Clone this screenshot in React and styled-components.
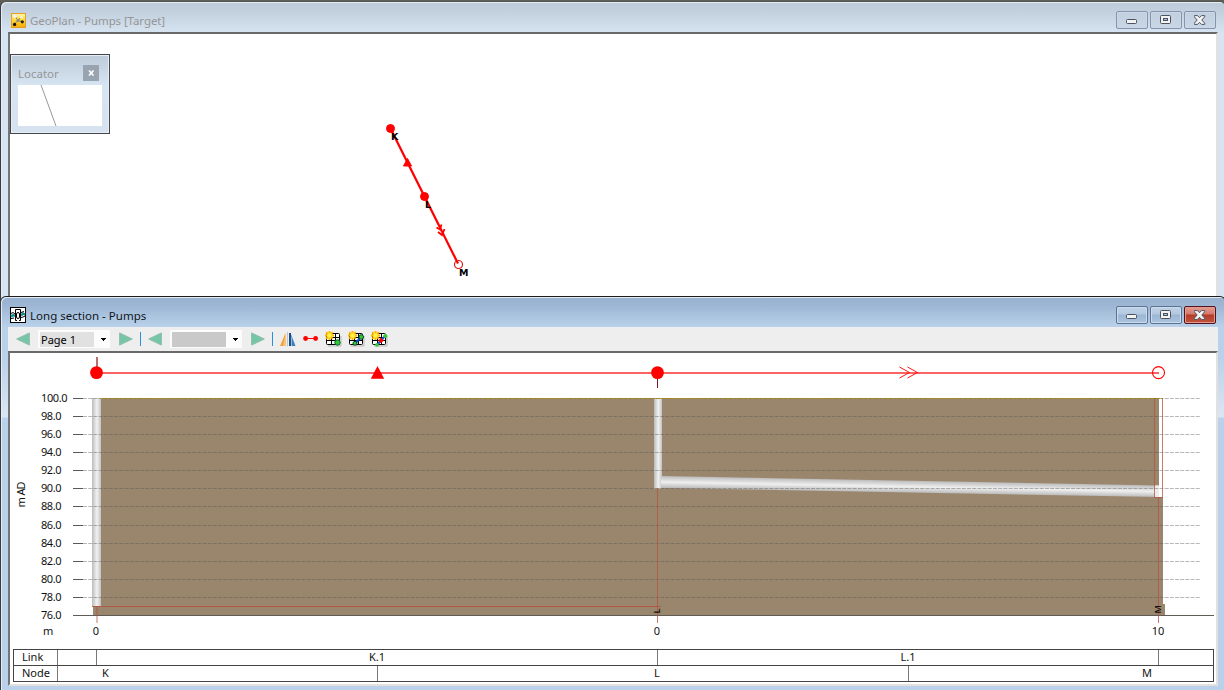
import React from 'react';
import styled, { createGlobalStyle, css } from 'styled-components';

const Global = createGlobalStyle`
  html, body { margin: 0; padding: 0; overflow: hidden; background: #fff; }
  * { box-sizing: border-box; }
  svg { display: block; flex: none; }
`;

const FONT = '"Noto Sans", "Open Sans", sans-serif';

const Desktop = styled.div`
  position: relative;
  width: 1224px;
  height: 690px;
  overflow: hidden;
  background: #5f5f59;
  font-family: ${FONT};
  font-size: 12px;
`;

const Window = styled.section`
  position: absolute;
  left: 0;
  top: ${(p) => p.$top}px;
  width: 1226px;
  height: ${(p) => p.$height}px;
  display: flex;
  flex-direction: column;
  border: 1px solid ${(p) => (p.$active ? '#1c1c1c' : '#55554f')};
  border-left-color: #3a3a42;
  border-radius: 6px 6px 0 0;
  padding: 0 7px ${(p) => (p.$active ? 4 : 0)}px;
  overflow: hidden;
  box-shadow: inset 1px 1px 0 #e4edf6;
  ${(p) =>
    p.$active
      ? css`
          background: linear-gradient(#97b2cf 0, #9cb6d3 8px, #b9d1ea 30px, #b9d1ea 60px, #dbe6f3 120px, #b9d1ea 121px);
        `
      : css`
          background: linear-gradient(#bdcad8 0, #c3d0de 10px, #d7e4f2 31px, #d7e4f2 100%);
        `}
`;

const TitleBar = styled.header`
  display: flex;
  flex: none;
  align-items: center;
  height: 30px;
  padding: 6px 2px 0 2px;
`;

const Title = styled.h1`
  flex: 1;
  margin: 1px 0 0 4px;
  font-size: 11.5px;
  line-height: 16px;
  font-weight: 400;
  letter-spacing: ${(p) => p.$spacing}px;
  white-space: nowrap;
  color: ${(p) => (p.$active ? '#10151c' : '#969696')};
`;

const Buttons = styled.div`
  display: flex;
  gap: 2px;
`;

const CaptionButton = styled.button`
  display: grid;
  place-items: center;
  width: 32px;
  height: 18px;
  padding: 0;
  border-radius: 2px;
  border: 1px solid ${(p) => (p.$red ? '#4f1420' : p.$active ? '#5c7290' : '#8494b0')};
  box-shadow: inset 0 0 0 1px ${(p) => (p.$red ? '#e39b90' : p.$active ? '#cbdcee' : '#cad7e5')};
  background: ${(p) =>
    p.$red
      ? 'linear-gradient(#e29c90 0, #d5796c 7px, #b43b26 8px, #c2553f 100%)'
      : p.$active
        ? 'linear-gradient(#bfd2e6 0, #b4cae1 7px, #9bb6d3 8px, #abc4df 100%)'
        : 'linear-gradient(#c2cfde, #c9d6e5)'};
`;

const Client = styled.main`
  position: relative;
  flex: 1;
  min-height: 0;
  width: 1210px;
  background: #fff;
  border: 2px solid #696969;
  border-left-color: #757575;
  border-right-color: #e3e1df;
  border-bottom-color: #e3e1df;
`;

const Locator = styled.aside`
  position: absolute;
  left: 0;
  top: 20px;
  width: 100px;
  height: 80px;
  border: 1px solid #45454c;
  box-shadow: inset 0 0 0 1px #e6edf5;
  background: linear-gradient(#bdcad8, #d7e4f2 30px, #d7e2f0);
  padding: 10px 7px 7px;
`;

const LocatorHead = styled.div`
  display: flex;
  justify-content: space-between;
  height: 20px;
  padding-right: 3px;
  color: #969696;
  font-size: 11.5px;
  line-height: 17px;
`;

const LocatorClose = styled.button`
  display: grid;
  place-items: center;
  width: 16px;
  height: 16px;
  padding: 0;
  border: 0;
  background: #98a4b0;
`;

const LocatorMap = styled.div`
  height: 41px;
  width: 84px;
  background: #fff;
`;

const Toolbar = styled.nav`
  display: flex;
  flex: none;
  align-items: center;
  width: 1210px;
  height: 24px;
  padding-left: 8px;
  background: #eee;
`;

const Slot = styled.span`
  display: block;
  margin-left: ${(p) => p.$before || 0}px;
`;

const Select = styled.div`
  display: flex;
  align-items: center;
  margin-left: 8px;
  width: 72px;
  height: 18px;
  padding: 0 4px 0 2px;
  background: #fcfcfc;
  justify-content: space-between;
`;

const SelectValue = styled.span`
  width: 54px;
  height: 15px;
  padding-left: 1px;
  background: ${(p) => (p.$empty ? '#c9c9c9' : '#e1e1e1')};
  color: #000;
  font-size: 11px;
  line-height: 16px;
  white-space: nowrap;
`;

const Separator = styled.i`
  width: 1px;
  height: 14px;
  margin-left: 7px;
  background: #2b8fe0;
`;

const Table = styled.div`
  width: 1201px;
  margin-left: 3px;
  border: 1px solid #444;
  font-size: 11px;
`;

const Row = styled.div`
  display: grid;
  grid-template-columns: ${(p) => p.$columns};
  height: ${(p) => (p.$last ? 15 : 16)}px;
  border-bottom: ${(p) => (p.$last ? 0 : 1)}px solid #444;
`;

const Cell = styled.div`
  border-right: ${(p) => (p.$end ? 0 : 1)}px solid #777;
  padding-left: ${(p) => p.$pad || 0}px;
  text-align: ${(p) => p.$align || 'left'};
  line-height: 14px;
  color: #111;
`;

const MinGlyph = () => (
  <svg width="12" height="8" viewBox="0 0 12 8">
    <rect x=".5" y="3.5" width="10" height="4" rx="1" fill="#f2f2f2" stroke="#4b5260" />
  </svg>
);
const MaxGlyph = () => (
  <svg width="12" height="10" viewBox="0 0 12 10">
    <rect x=".5" y=".5" width="10" height="8" rx="1" fill="#f2f2f2" stroke="#4b5260" />
    <rect x="3.5" y="3.5" width="4" height="2" fill="#a9bfda" stroke="#4b5260" />
  </svg>
);
const CloseGlyph = () => (
  <svg width="12" height="10" viewBox="0 0 12 10">
    <path d="M.3.6H3.500L5.500 2.700 7.500 .6h3.200v1.200L7.800 5l2.900 3.200v1.200H7.500L5.500 7.300 3.500 9.400H.3V8.200L3.200 5 .3 1.800Z" fill="#f4f4f4" stroke="#4b5260" />
  </svg>
);

const WindowButtons = ({ active }) => (
  <Buttons>
    <CaptionButton $active={active} aria-label="Minimize"><MinGlyph /></CaptionButton>
    <CaptionButton $active={active} aria-label="Maximize"><MaxGlyph /></CaptionButton>
    <CaptionButton $active={active} $red={active} aria-label="Close"><CloseGlyph /></CaptionButton>
  </Buttons>
);

const PlanIcon = () => (
  <svg width="15" height="15" viewBox="0 0 15 15">
    <defs>
      <linearGradient id="gold" x2="0" y2="1">
        <stop stopColor="#fff6a8" />
        <stop offset=".5" stopColor="#ffd633" />
        <stop offset="1" stopColor="#f9a800" />
      </linearGradient>
    </defs>
    <rect x=".5" y=".5" width="14" height="14" fill="url(#gold)" stroke="#dfa02c" />
    <path d="M4 3l3 4.500 4 1M7 7.500L3.500 11M7 7.500L10 4" stroke="#8a7c50" fill="none" />
    <g fill="#eef1f4"><circle cx="4" cy="3" r="1.900" /><circle cx="10.200" cy="4.200" r="1.200" /></g>
    <circle cx="7" cy="7.400" r="1.500" fill="#8c8c8c" />
    <circle cx="3.600" cy="11.400" r="1.600" fill="#111" />
    <circle cx="11.300" cy="8.800" r="1.600" fill="#222" />
  </svg>
);

const SectionIcon = () => (
  <svg width="16" height="16" viewBox="0 0 16 16">
    <rect x=".5" y=".5" width="15" height="15" fill="#fff" stroke="#000" />
    <path d="M1 9.500l2-1.500 2 1M11 8.500l2-2 2 1" stroke="#0b8c8c" strokeWidth="2.200" fill="none" />
    <path d="M1 6.500l2-1 2 1.500M1 11.500l3-.5M11 10.500l2-.5 2-1M11 5.500l3-1" stroke="#000" fill="none" />
    <path d="M5.500 13.500V2.500h5v11M5.500 13.500h1.500M9 13.500h1.500" stroke="#000" fill="none" />
    <rect x="6.500" y="5.500" width="3" height="6" rx="1.500" fill="#fff" stroke="#000" />
  </svg>
);

const NavArrow = ({ right }) => (
  <svg width="14" height="14" viewBox="0 0 14 14">
    <path d={right ? 'M.6.900v12.200L13.300 7Z' : 'M13.400.900v12.200L.7 7Z'} fill="#75c5a6" stroke="#91bcae" />
  </svg>
);
const DropArrow = () => (
  <svg width="5" height="3" viewBox="0 0 5 3" shapeRendering="crispEdges"><path d="M0 0h5v1H4v1H3v1H2V2H1V1H0Z" fill="#000" /></svg>
);
const MirrorIcon = () => (
  <svg width="16" height="15" viewBox="0 0 16 15">
    <path d="M0 14L5.500 1v13Z" fill="#f4a23a" />
    <path d="M3 14L5.500 2v12Z" fill="#f9c27a" />
    <path d="M7.500 0v14.500" stroke="#c4c4c4" />
    <path d="M9 14V1h1.500l5 13Z" fill="#3d7fbc" />
    <path d="M9 14V1h2v13Z" fill="#1a4f8c" />
    <path d="M11.500 14V5" stroke="#8fc0e6" />
  </svg>
);
const LinkIcon = () => (
  <svg width="16" height="6" viewBox="0 0 16 6">
    <path d="M3 2.500h10" stroke="#f00" />
    <circle cx="2.600" cy="2.500" r="2.400" fill="#f00" /><circle cx="12.600" cy="2.500" r="2.400" fill="#f00" />
  </svg>
);
const GridIcon = ({ kind }) => (
  <svg width="17" height="16" viewBox="0 0 17 16">
    <path d="M3 15h13V5" stroke="#b5b5b5" fill="none" />
    <rect x="1.500" y="2.500" width="13" height="11" fill="#fff" stroke="#000" rx="1" />
    <path d="M1 6.500h14M1 9.500h14M6.500 3v11M10.500 3v11" stroke="#000" />
    <path d="M4.500 0v9M0 4.500h9M1.200 1.200l6.600 6.600M7.800 1.200L1.200 7.800" stroke="#ffb400" strokeWidth="1.900" />
    <circle cx="4.500" cy="4.500" r="3" fill="#ffc400" />
    <circle cx="4.500" cy="4.500" r="2.200" fill="#fff34a" />
    {kind === 'node' && <circle cx="12.500" cy="11.500" r="2.700" fill="#36c936" stroke="#063" />}
    {kind === 'link' && (
      <>
        <path d="M7 12.500l6-6.500" stroke="#1148e8" strokeWidth="2" />
        <circle cx="7" cy="12.300" r="2" fill="#36c936" stroke="#042" />
        <circle cx="13.200" cy="6" r="2.300" fill="#36c936" stroke="#042" />
      </>
    )}
    {kind === 'both' && (
      <>
        <path d="M6 14l8-9" stroke="#1148e8" strokeWidth="2" />
        <path d="M8.700 11l2.600-3" stroke="#f00" strokeWidth="4" />
        <circle cx="6" cy="13.800" r="1.900" fill="#36c936" />
        <circle cx="14.300" cy="5" r="2.100" fill="#36c936" />
      </>
    )}
  </svg>
);

const PlanMap = () => (
  <svg width="1206" height="264" viewBox="10 34 1206 264">
    <g stroke="red" fill="red">
      <path d="M390.500 128.500L458 263.500" strokeWidth="2.200" />
      <circle cx="390.500" cy="128.500" r="4" />
      <circle cx="424.500" cy="196.500" r="4" />
      <path d="M407.500 158.500l4 7.500h-8Z" />
      <path d="M436.500 227.500l3.500 2 1.500-5M438 232l4 3 2.500-6" fill="none" strokeWidth="1.800" />
      <circle cx="458.500" cy="264.500" r="4" fill="none" strokeWidth="1.200" stroke="#e01818" />
    </g>
    <g fontFamily='"DejaVu Sans", sans-serif' fontWeight="700" fontSize="9.500" fill="#000">
      <text x="391" y="139.500">K</text>
      <text x="425" y="207.500">L</text>
      <text x="459" y="275.500">M</text>
    </g>
  </svg>
);

const levels = Array.from({ length: 13 }, (_, i) => ({
  label: (100 - i * 2).toFixed(1),
  y: Math.round(398 + i * 18.08) + 0.5,
}));

const SectionChart = () => (
  <svg width="1206" height="296" viewBox="10 353 1206 296">
    <defs>
      <linearGradient id="shaft">
        <stop stopColor="#b9b9b9" /><stop offset=".2" stopColor="#d0d0d0" />
        <stop offset=".55" stopColor="#f1f1f1" /><stop offset="1" stopColor="#c2c2c2" />
      </linearGradient>
      <linearGradient id="pipe" gradientUnits="userSpaceOnUse" x1="0" y1="0" x2="0" y2="1" gradientTransform="translate(661 476) rotate(1.100) scale(12)">
        <stop stopColor="#bcbcbc" /><stop offset=".5" stopColor="#efefef" /><stop offset="1" stopColor="#b8b8b8" />
      </linearGradient>
    </defs>

    <path d="M93 606h8V398h1058v99h4v107h2v11H93Z" fill="#9a866c" />
    <rect x="92" y="398" width="9" height="208" fill="url(#shaft)" />
    <rect x="654" y="398" width="8" height="90.500" fill="url(#shaft)" />
    <path d="M661 476l498 9.500v11.500L661 488Z" fill="url(#pipe)" />
    <rect x="1159" y="399" width="4" height="98" fill="#fff" />
    <rect x="1155" y="485.500" width="4" height="11.500" fill="#ececec" />

    {levels.slice(0, 12).map((l) => (
      <path key={l.label} d={`M83 ${l.y}H1200`} stroke="#555" strokeOpacity=".42" strokeDasharray="4 1.200" />
    ))}
    {levels.map((l) => (
      <path key={l.label} d={`M73 ${l.y}h10`} stroke="#5a5a5a" />
    ))}
    <path d="M101 398.500h1062" stroke="#a48a20" strokeDasharray="4 1" />
    <path d="M73 615.500h1141" stroke="#5f5b55" />

    <g stroke="#b4523f" fill="none">
      <path d="M92 606.500h569" strokeOpacity=".85" />
      <path d="M97 607v16" strokeOpacity=".5" strokeWidth="1.500" />
      <path d="M657.500 488v135M1158.500 498v125" strokeOpacity=".75" />
      <path d="M1154.500 398v99.500h8v-99.500" strokeOpacity=".75" />
    </g>

    <path d="M97 357v12" stroke="#b97070" strokeWidth="2" />
    <path d="M657.500 375v13" stroke="#7a1420" />
    <g stroke="red" fill="none">
      <path d="M97 373h1062" stroke="#ff3030" strokeWidth="1.300" />
      <path d="M899.500 367l10 5.500-10 5.500M907.500 367l10 5.500-10 5.500" strokeWidth=".9" />
      <circle cx="1158.500" cy="372.600" r="6" strokeWidth="1.100" />
    </g>
    <g fill="red">
      <circle cx="96.500" cy="372.600" r="6.400" />
      <circle cx="657.500" cy="372.600" r="6.400" />
      <path d="M377.500 366l6.700 12.700h-13.400Z" />
    </g>

    <g fontFamily={FONT} fontSize="11" fill="#111">
      {levels.map((l, i) => (
        <text key={l.label} x="41" y={l.y + 3.5} textLength={i ? 20.5 : 26.5}>{l.label}</text>
      ))}
      <text x="43" y="635">m</text>
      <text x="96" y="635" textAnchor="middle">0</text>
      <text x="657" y="635" textAnchor="middle">0</text>
      <text x="1158" y="635" textAnchor="middle">10</text>
      <text transform="translate(25.300 507.500) rotate(-90)" textLength="26" wordSpacing="1">m AD</text>
      <text transform="translate(659.500 613.500) rotate(-90)" fontSize="9" fontWeight="600">L</text>
      <text transform="translate(1161 613.500) rotate(-90)" fontSize="9" fontWeight="600">M</text>
    </g>
  </svg>
);

export default function App() {
  return (
    <Desktop>
      <Global />
      <Window $top={1} $height={330}>
        <TitleBar>
          <Slot $before={1}><PlanIcon /></Slot>
          <Title $spacing={-0.09}>GeoPlan - Pumps [Target]</Title>
          <WindowButtons />
        </TitleBar>
        <Client>
          <PlanMap />
          <Locator>
            <LocatorHead>
              <span>Locator</span>
              <LocatorClose aria-label="Close locator">
                <svg width="7" height="6" viewBox="0 0 7 6"><path d="M1 .5l4.500 5M5.500.500L1 5.500" stroke="#fff" strokeWidth="1.600" /></svg>
              </LocatorClose>
            </LocatorHead>
            <LocatorMap>
              <svg width="84" height="41"><path d="M23 0l15 41" stroke="#999" /></svg>
            </LocatorMap>
          </Locator>
        </Client>
      </Window>

      <Window $active $top={296} $height={395}>
        <TitleBar>
          <Slot><SectionIcon /></Slot>
          <Title $active $spacing={0.02}>Long section - Pumps</Title>
          <WindowButtons active />
        </TitleBar>
        <Toolbar>
          <NavArrow />
          <Select><SelectValue>Page 1</SelectValue><DropArrow /></Select>
          <Slot $before={9}><NavArrow right /></Slot>
          <Separator />
          <Slot $before={7}><NavArrow /></Slot>
          <Select><SelectValue $empty /><DropArrow /></Select>
          <Slot $before={9}><NavArrow right /></Slot>
          <Separator />
          <Slot $before={7}><MirrorIcon /></Slot>
          <Slot $before={7}><LinkIcon /></Slot>
          <Slot $before={6}><GridIcon kind="node" /></Slot>
          <Slot $before={6}><GridIcon kind="link" /></Slot>
          <Slot $before={6}><GridIcon kind="both" /></Slot>
        </Toolbar>
        <Client>
          <SectionChart />
          <Table>
            <Row $columns="44px 39px 561px 501px 1fr">
              <Cell $pad={8}>Link</Cell>
              <Cell />
              <Cell $align="center">K.1</Cell>
              <Cell $align="center">L.1</Cell>
              <Cell $end />
            </Row>
            <Row $last $columns="44px 320px 531px 1fr">
              <Cell $pad={8}>Node</Cell>
              <Cell $pad={44}>K</Cell>
              <Cell $align="center" $pad={28}>L</Cell>
              <Cell $end $pad={233}>M</Cell>
            </Row>
          </Table>
        </Client>
      </Window>
    </Desktop>
  );
}
